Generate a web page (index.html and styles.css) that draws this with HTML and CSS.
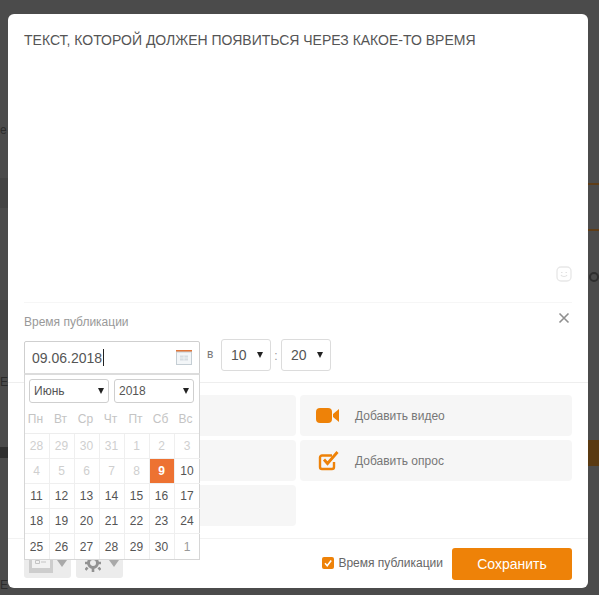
FILE: index.html
```html
<!DOCTYPE html>
<html lang="ru">
<head>
<meta charset="utf-8">
<title>Время публикации</title>
<link rel="stylesheet" href="styles.css">
</head>
<body>
<div class="backdrop" aria-hidden="true">
  <span class="peek peek-a">е</span>
  <span class="peek peek-b">Е</span>
  <span class="peek peek-c">Е</span>
  <i class="lens"></i>
  <i class="stripe stripe-1"></i>
  <i class="stripe stripe-2"></i>
  <i class="block"></i>
  <i class="band band-1"></i>
  <i class="band band-2"></i>
  <i class="band band-3"></i>
</div>
<main class="modal">
  <section class="composer">
    <p class="post-text">ТЕКСТ, КОТОРОЙ ДОЛЖЕН ПОЯВИТЬСЯ ЧЕРЕЗ КАКОЕ-ТО ВРЕМЯ</p>
    <svg class="smile" viewBox="0 0 16 16" width="16" height="16"><rect x="1" y="1" width="14" height="14" rx="4" fill="none" stroke="#e8e8e8" stroke-width="1.400"/><path d="M5 9c1 2 5 2 6 0M5 6.500h1.500M9.500 6.500H11" fill="none" stroke="#e2e2e2" stroke-width="1.200"/></svg>
  </section>
  <section class="schedule">
    <div class="schedule-head">
      <span class="schedule-title">Время публикации</span>
      <svg class="close" viewBox="0 0 12 12" width="12" height="12"><path d="M1.500 1.500l9 9M10.500 1.500l-9 9" stroke="#8f8f8f" stroke-width="1.600" fill="none"/></svg>
    </div>
    <div class="schedule-row">
      <div class="date-input">
        <span class="date-value">09.06.2018</span><span class="caret"></span>
        <svg class="cal-icon" viewBox="0 0 16 15" width="16" height="15"><rect x="0" y="0" width="16" height="2" fill="#e0763a"/><rect x=".5" y="2" width="15" height="12.500" fill="#f3f6f8" stroke="#c5ced4"/><path d="M4 5.500h8v5H4z" fill="#d6dde2"/><path d="M4 8h8M8 5.500v5" stroke="#f3f6f8" stroke-width=".8"/></svg>
      </div>
      <span class="at">в</span>
      <div class="select time"><span>10</span><b class="arrow"></b></div>
      <span class="colon">:</span>
      <div class="select time"><span>20</span><b class="arrow"></b></div>
    </div>
  </section>
  <section class="tiles">
    <div class="tile"></div>
    <div class="tile">
      <svg class="tile-icon" viewBox="0 0 24 16" width="24" height="16"><rect x="0" y="0" width="16" height="15" rx="4" fill="#ee8208"/><path d="M23 1v13l-6-5V6z" fill="#ee8208"/></svg>
      <span>Добавить видео</span>
    </div>
    <div class="tile"></div>
    <div class="tile">
      <svg class="tile-icon poll" viewBox="0 0 21 20" width="21" height="20"><path d="M14 4.500H4a2 2 0 0 0-2 2V16a2 2 0 0 0 2 2h10a2 2 0 0 0 2-2v-5" fill="none" stroke="#ee8208" stroke-width="2.400"/><path d="M6 8.500l3.500 4L19.500 1" fill="none" stroke="#ee8208" stroke-width="2.800"/></svg>
      <span>Добавить опрос</span>
    </div>
    <div class="tile"></div>
  </section>
  <footer class="footer">
    <div class="tools">
      <div class="tool">
        <svg class="tool-card" viewBox="0 0 24 16" width="24" height="16"><rect x="0" y="0" width="24" height="16" fill="#cdcdcd"/><rect x="3" y="0" width="18" height="11" fill="#f2f2f2"/><path d="M6.500 3.500h4v3h-4zM12 5h5" fill="none" stroke="#c4c4c4"/></svg>
        <b class="tool-arrow"></b>
      </div>
      <div class="tool">
        <svg class="tool-gear" viewBox="0 0 16 14" width="16" height="14"><circle cx="8" cy="4" r="4.500" fill="none" stroke="#929292" stroke-width="3"/><path d="M8 9v4M2.500 8.500L.5 11M13.500 8.500l2 2.500M3 4H0M13 4h3" stroke="#929292" stroke-width="2.600" fill="none"/></svg>
        <b class="tool-arrow"></b>
      </div>
    </div>
    <label class="check">
      <span class="checkbox"><svg viewBox="0 0 12 12" width="12" height="12"><path d="M3 6.300l2.200 2.400L9.200 3.500" fill="none" stroke="#fff" stroke-width="1.600"/></svg></span>
      Время публикации
    </label>
    <button class="save" type="button">Сохранить</button>
  </footer>
  <div class="calendar">
    <div class="cal-selects">
      <div class="select cal-select"><span>Июнь</span><b class="arrow"></b></div>
      <div class="select cal-select"><span>2018</span><b class="arrow"></b></div>
    </div>
    <div class="cal-head">
      <span>Пн</span><span>Вт</span><span>Ср</span><span>Чт</span><span>Пт</span><span>Сб</span><span>Вс</span>
    </div>
    <div class="cal-grid">
      <span class="off">28</span><span class="off">29</span><span class="off">30</span><span class="off">31</span><span class="off">1</span><span class="off">2</span><span class="off">3</span>
      <span class="off">4</span><span class="off">5</span><span class="off">6</span><span class="off">7</span><span class="off">8</span><span class="today">9</span><span>10</span>
      <span>11</span><span>12</span><span>13</span><span>14</span><span>15</span><span>16</span><span>17</span>
      <span>18</span><span>19</span><span>20</span><span>21</span><span>22</span><span>23</span><span>24</span>
      <span>25</span><span>26</span><span>27</span><span>28</span><span>29</span><span>30</span><span class="next">1</span>
    </div>
  </div>
</main>
</body>
</html>
```
FILE: styles.css
```css
* { box-sizing: border-box; }
html, body { margin: 0; height: 100%; }
body {
  width: 599px;
  height: 595px;
  overflow: hidden;
  position: relative;
  background: #4b4b4b;
  padding: 14px 11px 7px 8px;
  font-family: "Liberation Sans", Arial, sans-serif;
  color: #333;
}
.backdrop { position: absolute; inset: 0; overflow: hidden; }
.peek { position: absolute; left: 0; font-size: 12px; line-height: 14px; color: #2b2b2b; }
.peek-a { top: 123px; }
.peek-b { top: 375px; }
.peek-c { top: 578px; }
.lens {
  position: absolute;
  left: 589px;
  top: 272px;
  width: 10px;
  height: 10px;
  border: 2px solid #2e2e2e;
  border-radius: 50%;
}
.stripe { position: absolute; left: 588px; width: 11px; height: 2px; background: #5e3d18; }
.stripe-1 { top: 183px; }
.stripe-2 { top: 229px; }
.block { position: absolute; left: 588px; top: 440px; width: 11px; height: 26px; background: #5a3a12; }
.band { position: absolute; left: 0; width: 8px; background: #444; }
.band-1 { top: 178px; height: 30px; }
.band-2 { top: 300px; height: 40px; }
.band-3 { top: 447px; height: 11px; background: #2f2f2f; }

.modal {
  position: relative;
  width: 580px;
  height: 574px;
  background: #fff;
  border-radius: 6px;
  display: flex;
  flex-direction: column;
}
.composer {
  height: 289px;
  margin: 0 16px;
  padding-top: 18px;
  border-bottom: 1px solid #f6f6f6;
  position: relative;
}
.post-text { margin: 0; font-size: 14px; line-height: 16px; color: #555; }
.smile { position: absolute; right: 0; bottom: 20px; }

.schedule {
  height: 80px;
  padding: 0 16px;
  border-bottom: 1px solid #eeeeee;
}
.schedule-head {
  display: flex;
  justify-content: space-between;
  align-items: center;
  height: 36px;
  padding-right: 2px;
}
.schedule-title { font-size: 12px; color: #999; position: relative; top: 1px; }
.close { margin-top: -7px; }
.schedule-row { display: flex; align-items: flex-start; height: 33px; }
.date-input {
  width: 176px;
  height: 33px;
  margin-top: 2px;
  border: 1px solid #cfcfcf;
  border-radius: 2px 2px 0 0;
  display: flex;
  align-items: center;
  padding: 0 7px 0 7px;
  font-size: 14px;
  color: #555;
}
.caret { width: 1px; height: 17px; background: #222; margin-left: 1px; }
.cal-icon { margin-left: auto; }
.at { width: 21px; padding-left: 7px; font-size: 12px; line-height: 31px; color: #777; flex: none; }
.select {
  display: flex;
  align-items: center;
  justify-content: space-between;
  border: 1px solid #dcdcdc;
  border-radius: 3px;
  background: #fff;
  color: #555;
}
.time { width: 50px; height: 32px; font-size: 14px; padding: 0 7px 0 9px; }
.colon { width: 10px; text-align: center; font-size: 12px; line-height: 34px; color: #999; }
.arrow {
  width: 0; height: 0;
  border-left: 3.500px solid transparent;
  border-right: 3.500px solid transparent;
  border-top: 6px solid #222;
}

.tiles {
  height: 156px;
  padding: 12px 16px 0;
  display: grid;
  grid-template-columns: 272px 272px;
  grid-auto-rows: 41px;
  column-gap: 4px;
  row-gap: 4px;
  border-bottom: 1px solid #f2f2f2;
}
.tile {
  background: #f6f6f6;
  border-radius: 4px;
  display: flex;
  align-items: center;
  font-size: 12px;
  color: #777;
}
.tile-icon { margin-left: 16px; margin-right: 15px; flex: none; }
.tile-icon.poll { margin-left: 18px; margin-right: 16px; }

.footer {
  flex: 1;
  display: flex;
  align-items: flex-start;
  padding: 9px 16px 0;
  position: relative;
}
.tools { display: flex; gap: 5px; }
.tool {
  width: 47px;
  height: 30px;
  background: #ececec;
  border-radius: 3px;
  position: relative;
}
.tool-card { position: absolute; left: 5px; top: 9px; }
.tool-gear { position: absolute; left: 9px; top: 11px; }
.tool-arrow {
  position: absolute;
  right: 4px;
  top: 12px;
  width: 0; height: 0;
  border-left: 5px solid transparent;
  border-right: 5px solid transparent;
  border-top: 7px solid #a9a9a9;
}
.check {
  margin-left: auto;
  display: flex;
  align-items: center;
  gap: 4px;
  height: 22px;
  margin-top: 4px;
  font-size: 12px;
  color: #666;
}
.checkbox {
  width: 12px; height: 12px;
  background: #ee8208;
  border-radius: 2px;
  display: block;
}
.checkbox svg { display: block; }
.save {
  margin-left: 9px;
  width: 120px;
  height: 32px;
  border: 0;
  border-radius: 3px;
  background: #ee8208;
  color: #fff;
  font: 14px "Liberation Sans", Arial, sans-serif;
}

.calendar {
  position: absolute;
  left: 16px;
  top: 359px;
  width: 176px;
  height: 187px;
  background: #fff;
  border: 1px solid #d6d6d6;
  border-top: 2px solid #dcdcdc;
}
.cal-selects { display: flex; gap: 5px; padding: 4px 4px 0; }
.cal-select { width: 80px; height: 24px; font-size: 12px; padding: 0 4px 0 4px; border-color: #cfcfcf; }
.cal-head {
  display: grid;
  grid-template-columns: repeat(7, 25px);
  height: 31px;
  align-items: center;
  text-align: center;
  font-size: 12px;
  color: #c4c4c4;
  padding-top: 2px;
  border-bottom: 1px solid #ededed;
}
.cal-head span { position: relative; left: -2px; }
.cal-grid {
  display: grid;
  grid-template-columns: repeat(7, 25px);
  grid-auto-rows: 25px;
  font-size: 12px;
  color: #555;
}
.cal-grid span {
  display: flex;
  align-items: center;
  justify-content: center;
  padding-right: 1px;
  border-right: 1px solid #efefef;
  border-bottom: 1px solid #efefef;
}
.cal-grid span:nth-child(7n) { border-right: 0; }
.cal-grid span:nth-last-child(-n+7) { border-bottom: 0; }
.cal-grid .off { color: #cfcfcf; }
.cal-grid .next { color: #999; }
.cal-grid .today { background: #ed7232; color: #fff; font-weight: bold; }
```
